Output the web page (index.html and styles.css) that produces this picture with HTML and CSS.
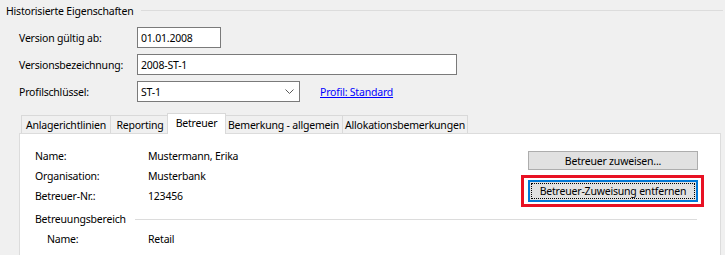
FILE: index.html
```html
<!DOCTYPE html>
<html lang="de">
<head>
    <meta charset="UTF-8">
    <title>Historisierte Eigenschaften</title>
    <link rel="stylesheet" href="styles.css">
</head>
<body>
    <div class="group-head">
        <span class="group-title">Historisierte Eigenschaften</span>
        <span class="rule"></span>
    </div>

    <div class="fields">
        <div class="field-row">
            <label class="field-label">Version gültig ab:</label>
            <div class="textbox date">01.01.2008</div>
        </div>
        <div class="field-row">
            <label class="field-label">Versionsbezeichnung:</label>
            <div class="textbox wide">2008-ST-1</div>
        </div>
        <div class="field-row">
            <label class="field-label">Profilschlüssel:</label>
            <div class="textbox combo">
                <span>ST-1</span>
                <svg class="chevron" width="9" height="5" viewBox="0 0 9 5">
                    <path d="M0.5 0.5 L4.5 4.5 L8.5 0.5" fill="none" stroke="#5a5a5a" stroke-width="1"/>
                </svg>
            </div>
            <a href="#" class="link">Profil: Standard</a>
        </div>
    </div>

    <div class="tabs">
        <div class="tab t-anlage">Anlagerichtlinien</div>
        <div class="tab t-report">Reporting</div>
        <div class="tab active">Betreuer</div>
        <div class="tab t-bem">Bemerkung - allgemein</div>
        <div class="tab t-allo">Allokationsbemerkungen</div>
    </div>

    <div class="panel">
        <div class="panel-top">
            <div class="info">
                <div class="info-row"><span class="info-label">Name:</span><span>Mustermann, Erika</span></div>
                <div class="info-row"><span class="info-label">Organisation:</span><span>Musterbank</span></div>
                <div class="info-row"><span class="info-label">Betreuer-Nr.:</span><span>123456</span></div>
            </div>
            <div class="actions">
                <button class="btn btn-assign">Betreuer zuweisen...</button>
                <span class="highlight">
                    <button class="btn btn-focus">Betreuer-Zuweisung entfernen</button>
                </span>
            </div>
        </div>

        <div class="section-head">
            <span>Betreuungsbereich</span>
            <span class="rule"></span>
        </div>
        <div class="info-row sub">
            <span class="info-label">Name:</span><span>Retail</span>
        </div>
    </div>
</body>
</html>
```

FILE: styles.css
```css
body {
    margin: 0;
    background: #f0f0f0;
    font-family: "Noto Sans", "Open Sans", sans-serif;
    font-size: 10.5px;
    letter-spacing: -0.2px;
    color: #000;
    overflow: hidden;
}

/* group box header */
.group-head {
    display: flex;
    align-items: center;
    height: 21px;
    padding-left: 6px;
    margin-right: 2px;
}
.group-title {
    margin-right: 8px;
}
.rule {
    flex: 1;
    height: 0;
    border-top: 1px solid #dcdcdc;
}

/* field rows */
.fields {
    display: flex;
    flex-direction: column;
    gap: 6px;
    margin-top: 6px;
    padding-left: 19px;
}
.field-row {
    display: flex;
    align-items: center;
    height: 21px;
}
.field-label {
    width: 118px;
}
.textbox {
    box-sizing: border-box;
    height: 21px;
    display: flex;
    align-items: center;
    padding: 0 3px;
    background: #fff;
    border: 1px solid #7a7a7a;
}
.date {
    width: 84px;
}
.wide {
    width: 320px;
}
.combo {
    width: 163px;
    justify-content: space-between;
    padding-right: 5px;
}
.link {
    margin-left: 20px;
    color: #0000ff;
    text-decoration: underline;
}

/* tabs */
.tabs {
    display: flex;
    align-items: flex-end;
    height: 20px;
    margin-top: 11px;
    padding-left: 21px;
    position: relative;
    z-index: 1;
}
.tab {
    box-sizing: border-box;
    height: 18px;
    display: flex;
    align-items: center;
    justify-content: center;
    white-space: nowrap;
    margin-left: -1px;
    background: #f0f0f0;
    border: 1px solid #d9d9d9;
    border-bottom: none;
}
.t-anlage { width: 90px; margin-left: 0; }
.t-report { width: 60px; }
.t-bem { width: 119px; margin-left: 0; }
.t-allo { width: 126px; }
.tab.active {
    width: 59px;
    height: 21px;
    margin-left: -3px;
    margin-right: -2px;
    margin-bottom: -1px;
    padding-bottom: 3px;
    background: #fff;
    position: relative;
    z-index: 2;
}

/* tab page */
.panel {
    margin-left: 19px;
    width: 702px;
    box-sizing: border-box;
    height: 122px;
    background: #fff;
    border: 1px solid #dcdcdc;
    border-bottom: none;
    padding: 12px 16px 0 15px;
}
.panel-top {
    display: flex;
}
.info-row {
    display: flex;
    align-items: center;
    height: 20px;
}
.info-label {
    width: 113px;
}
.actions {
    margin-left: auto;
    display: flex;
    flex-direction: column;
    align-items: flex-end;
    padding-top: 5px;
}
.btn {
    box-sizing: border-box;
    width: 170px;
    font-family: inherit;
    font-size: inherit;
    letter-spacing: inherit;
    color: #000;
    background: #e1e1e1;
    border: 1px solid #adadad;
    padding: 0;
}
.btn-assign {
    height: 19px;
    margin-right: 6px;
}
.highlight {
    display: block;
    margin-top: 5px;
    padding: 2px 3px 2px 4px;
    border: 3px solid #e81123;
}
.btn-focus {
    display: block;
    height: 22px;
    position: relative;
    border: 2px solid #0078d7;
}
.btn-focus::after {
    content: "";
    position: absolute;
    inset: 1px;
    border: 1px dotted #000;
}
.section-head {
    display: flex;
    align-items: center;
    height: 20px;
    margin-top: 2px;
    margin-right: 7px;
}
.section-head .rule {
    margin-left: 9px;
}
.sub {
    padding-left: 12px;
}
.sub .info-label {
    width: 101px;
}
```
